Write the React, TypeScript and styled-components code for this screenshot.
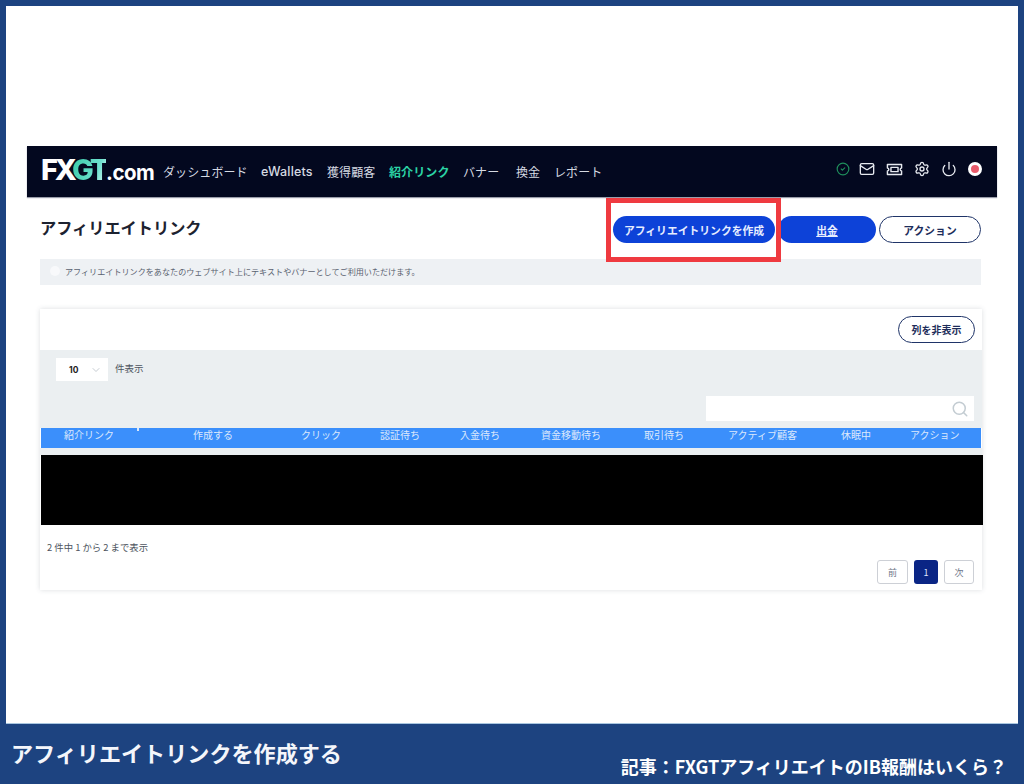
import React from "react";
import styled, { createGlobalStyle } from "styled-components";
import { CircleCheck, Mail, Settings, Power, Search, ChevronDown } from "lucide-react";

const Global = createGlobalStyle`
  html, body { margin: 0; padding: 0; background: #fff; }
  * { box-sizing: border-box; }
  body { font-family: "Noto Sans CJK JP", "Noto Sans", sans-serif; }
`;

const Frame = styled.div`
  width: 1024px; height: 784px; background: #1d4380;
  padding: 6px 6px 0; display: flex; flex-direction: column; overflow: hidden;
`;
const Sheet = styled.main`
  position: relative; height: 718px; background: #fff; padding: 140px 21px 0;
  border-bottom: 1px solid #a9c6e0;
`;
const Shot = styled.section`width: 970px;`;

const Nav = styled.header`
  height: 51px; background: #03081f; display: flex; align-items: center;
  padding: 0 15px 0 14px; box-shadow: 0 1px 1px #9a9daa;
`;
const Logo = styled.div`
  font-family: Inter, "Liberation Sans", sans-serif; font-weight: 700; font-size: 20.5px;
  letter-spacing: -0.5px; color: #fff; width: 122px; line-height: 1; margin-top: -5px; white-space: nowrap;
  b { font-size: 29px; font-weight: 800; letter-spacing: -3.2px; }
  i { font-style: normal; background: linear-gradient(110deg, #35c9a5, #6fe0cf 70%, #e8fffa); -webkit-background-clip: text; background-clip: text; color: transparent; }
`;
const Menu = styled.nav`display: flex; align-items: center; flex: 1;`;
const MenuItem = styled.span<{ $w: number; $active?: boolean; $latin?: boolean }>`
  width: ${p => p.$w}px; font-size: ${p => (p.$latin ? 12.5 : 12)}px; white-space: nowrap;
  font-family: ${p => (p.$latin ? "Inter, sans-serif" : `"Noto Sans CJK JP", sans-serif`)};
  font-weight: ${p => (p.$active ? 700 : p.$latin ? 500 : 400)};
  color: ${p => (p.$active ? "#2bd3a5" : "#d6dae2")};
  letter-spacing: ${p => (p.$latin ? "0.2px" : "0.1px")};
`;
const Tools = styled.div`
  display: flex; align-items: center; gap: 11px; color: #e6e9ef; margin-top: -5px;
  & > svg:first-child { margin-right: -2px; }
`;
const Flag = styled.span`
  width: 14px; height: 14px; border-radius: 50%; background: #e95b6b; border: 3.5px solid #fff;
`;

const TitleRow = styled.div`
  display: flex; align-items: flex-start; padding: 19px 16px 0 13px; height: 62px;
`;
const Title = styled.h1`
  flex: 1; margin: 0; font-size: 16.2px; font-weight: 700; color: #1c2230; line-height: 22px;
`;
const Pill = styled.button<{ $w: number; $outline?: boolean; $underline?: boolean }>`
  width: ${p => p.$w}px; height: 27px; border-radius: 14px; font-family: inherit; font-weight: 700; font-size: 10.8px;
  display: flex; align-items: center; justify-content: center; padding: 0; cursor: pointer; white-space: nowrap;
  background: ${p => (p.$outline ? "#fff" : "#0d42d8")};
  color: ${p => (p.$outline ? "#1d2d5a" : "#e6edff")};
  border: ${p => (p.$outline ? "1.5px solid #1f3468" : "none")};
  text-decoration: ${p => (p.$underline ? "underline" : "none")};
`;
const Pills = styled.div`display: flex; gap: 3px;`;

const Alert = styled.div`
  margin: 0 16px 0 13px; height: 26px; background: #eef1f4; display: flex; align-items: center;
  font-size: 8.1px; color: #5a6270; padding: 0 0 2px 10px; gap: 5px;
`;
const AlertDot = styled.span`width: 10px; height: 10px; border-radius: 50%; background: #f8f9fb;`;

const Card = styled.section`
  margin: 24px 15px 0 13px; height: 281px; background: #fff; box-shadow: 0 0 5px rgba(60,70,90,.18);
  display: flex; flex-direction: column;
`;
const CardTop = styled.div`height: 41px; display: flex; align-items: flex-start; justify-content: flex-end; padding: 7px 7px 0 0;`;
const SmallPill = styled.button`
  width: 77px; height: 27px; border-radius: 14px; background: #fff; border: 1.5px solid #1f3468;
  color: #1d2d5a; font-family: inherit; font-weight: 700; font-size: 10px; padding: 0; white-space: nowrap;
`;
const Filter = styled.div`height: 78px; background: #ebeff1; padding: 8px 8px 0 16px; display: flex; flex-direction: column;`;
const LengthRow = styled.div`display: flex; align-items: flex-start; gap: 7px; height: 38px;`;
const Select = styled.div`
  width: 52px; height: 23px; background: #fff; display: flex; align-items: center; justify-content: space-between;
  padding: 1px 6px 0 13px; font-family: Inter, sans-serif; font-size: 8.5px; font-weight: 700; color: #222;
`;
const LengthLabel = styled.span`font-size: 9.5px; color: #4e5560; line-height: 20px;`;
const SearchBox = styled.div`
  align-self: flex-end; width: 268px; height: 25px; background: #fff; display: flex; align-items: center;
  justify-content: flex-end; padding-right: 5px; color: #c3ccd2;
`;
const HeadRow = styled.div`
  height: 20px; background: #3b8ffb; display: grid; padding-left: 23px; position: relative; margin: 0 1px;
  grid-template-columns: 129px 108px 79px 80px 81px 103px 84px 113px 69px 73px;
`;
const HeadCell = styled.span`font-size: 10px; color: #dbe8fb; line-height: 14px; white-space: nowrap;`;
const Sort = styled.span`position: absolute; left: 96px; top: 0; width: 2px; height: 3px; background: #dbe8fb;`;
const Gap = styled.div`height: 7px; background: #ebeff1;`;
const Redacted = styled.div`height: 70px; background: #000; margin: 0 -1px 0 1px;`;
const CardFoot = styled.div`flex: 1; display: flex; flex-direction: column; padding: 14px 8px 0 7px;`;
const Info = styled.div`font-size: 9.4px; color: #4e5560; line-height: 17px; height: 21px;`;
const Pager = styled.div`display: flex; justify-content: flex-end; gap: 6px;`;
const PageBtn = styled.span<{ $w: number; $active?: boolean }>`
  width: ${p => p.$w}px; height: 24px; border-radius: 3px; font-size: 9px; display: flex; align-items: center; justify-content: center;
  background: ${p => (p.$active ? "#0a2585" : "#fff")};
  color: ${p => (p.$active ? "#dfe6ff" : "#70778a")};
  border: ${p => (p.$active ? "none" : "1px solid #cdd0d6")};
`;

const Callout = styled.div`
  position: absolute; left: 600px; top: 192px; width: 175px; height: 64px; border: 5px solid #ef3a40;
`;

const Footer = styled.footer`
  flex: 1; position: relative; color: #fff; font-family: "Noto Sans CJK JP", "DejaVu Sans", sans-serif;
`;
const FootTitle = styled.div`
  position: absolute; left: 5px; top: 13px; font-size: 22.1px; font-weight: 700; line-height: 30px; color: #f4f6fb;
`;
const FootLink = styled.div`
  position: absolute; right: 11px; top: 30px; font-size: 18px; font-weight: 700; line-height: 24px; white-space: nowrap;
`;

const Ticket = () => (
  <svg width="17" height="17" viewBox="0 0 24 24" fill="none" stroke="currentColor" strokeWidth="2" strokeLinejoin="round">
    <path d="M2 5h20v5a2 2 0 0 0 0 4v5H2v-5a2 2 0 0 0 0-4z" />
    <rect x="7" y="9" width="10" height="6" />
  </svg>
);

const cols = ["紹介リンク", "作成する", "クリック", "認証待ち", "入金待ち", "資金移動待ち", "取引待ち", "アクティブ顧客", "休眠中", "アクション"];

export default function App() {
  return (
    <Frame>
      <Global />
      <Sheet>
        <Shot>
          <Nav>
            <Logo><b>FX<i>GT</i></b>.com</Logo>
            <Menu>
              <MenuItem $w={98}>ダッシュボード</MenuItem>
              <MenuItem $w={66} $latin>eWallets</MenuItem>
              <MenuItem $w={62}>獲得顧客</MenuItem>
              <MenuItem $w={74} $active>紹介リンク</MenuItem>
              <MenuItem $w={53}>バナー</MenuItem>
              <MenuItem $w={38}>換金</MenuItem>
              <MenuItem $w={60}>レポート</MenuItem>
            </Menu>
            <Tools>
              <CircleCheck size={14} color="#1f8f5c" />
              <Mail size={16} />
              <Ticket />
              <Settings size={16} />
              <Power size={16} />
              <Flag />
            </Tools>
          </Nav>
          <TitleRow>
            <Title>アフィリエイトリンク</Title>
            <Pills>
              <Pill $w={162}>アフィリエイトリンクを作成</Pill>
              <Pill $w={98} $underline>出金</Pill>
              <Pill $w={102} $outline>アクション</Pill>
            </Pills>
          </TitleRow>
          <Alert>
            <AlertDot />
            アフィリエイトリンクをあなたのウェブサイト上にテキストやバナーとしてご利用いただけます。
          </Alert>
          <Card>
            <CardTop><SmallPill>列を非表示</SmallPill></CardTop>
            <Filter>
              <LengthRow>
                <Select>10 <ChevronDown size={12} color="#c6ccd2" /></Select>
                <LengthLabel>件表示</LengthLabel>
              </LengthRow>
              <SearchBox><Search size={18} /></SearchBox>
            </Filter>
            <HeadRow>
              {cols.map(c => <HeadCell key={c}>{c}</HeadCell>)}
              <Sort />
            </HeadRow>
            <Gap />
            <Redacted />
            <CardFoot>
              <Info>2 件中 1 から 2 まで表示</Info>
              <Pager>
                <PageBtn $w={31}>前</PageBtn>
                <PageBtn $w={24} $active>1</PageBtn>
                <PageBtn $w={30}>次</PageBtn>
              </Pager>
            </CardFoot>
          </Card>
        </Shot>
        <Callout />
      </Sheet>
      <Footer>
        <FootTitle>アフィリエイトリンクを作成する</FootTitle>
        <FootLink>記事：FXGTアフィリエイトのIB報酬はいくら？</FootLink>
      </Footer>
    </Frame>
  );
}
